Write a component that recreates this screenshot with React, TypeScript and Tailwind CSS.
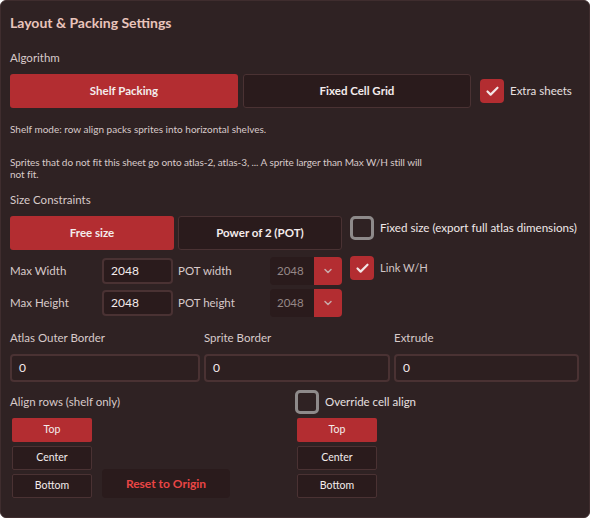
import { Check, ChevronDown } from 'lucide-react';

const font = { fontFamily: 'Lato, "Noto Sans", sans-serif' };

function Checkbox({ checked, label, labelClass }: { checked: boolean; label: string; labelClass?: string }) {
  return (
    <div className="flex items-center gap-[6px] shrink-0">
      {checked ? (
        <div className="w-[24px] h-[24px] shrink-0 rounded-[4px] bg-[#b32d31] flex items-center justify-center">
          <Check className="w-[15px] h-[15px] text-[#f2e6e6]" strokeWidth={3.5} />
        </div>
      ) : (
        <div className="w-[24px] h-[24px] shrink-0 rounded-[5px] border-[3px] border-[#8e8a8a]" />
      )}
      <span className={`whitespace-nowrap ${labelClass ?? 'text-[11.5px] text-[#e8e0e0]'}`}>{label}</span>
    </div>
  );
}

function SegButton({ active, label, className }: { active: boolean; label: string; className: string }) {
  return (
    <button
      className={
        active
          ? `${className} shrink-0 rounded-[3px] bg-[#b32d31] text-[#f4ecec] font-bold text-[11.5px]`
          : `${className} shrink-0 rounded-[3px] bg-[#2a1b1c] border border-[#4a3233] text-[#f4ecec] font-bold text-[11.5px]`
      }
    >
      {label}
    </button>
  );
}

function SmallButton({ active, label }: { active: boolean; label: string }) {
  return (
    <button
      className={
        active
          ? 'w-[80px] h-[24px] shrink-0 rounded-[2px] bg-[#b32d31] text-[10.5px] text-[#f4ecec]'
          : 'w-[80px] h-[24px] shrink-0 rounded-[2px] bg-[#2a1b1c] border border-[#4a3233] text-[10.5px] text-[#f4ecec]'
      }
    >
      {label}
    </button>
  );
}

function PotSelect() {
  return (
    <div className="flex w-[72px] h-[28px] shrink-0 rounded-[4px] overflow-hidden">
      <div className="flex-1 bg-[#2a1b1c] flex items-center pl-[7px] text-[11.5px] text-[#958787]">2048</div>
      <div className="w-[28px] bg-[#b32d31] flex items-center justify-center">
        <ChevronDown className="w-[12px] h-[12px] text-[#c9a9a9]" strokeWidth={3} />
      </div>
    </div>
  );
}

function NumInput({ value, className }: { value: string; className: string }) {
  return (
    <div
      className={`${className} shrink-0 rounded-[4px] border-2 border-[#4a3233] flex items-center px-[7px] text-[12px] text-[#f4ecec]`}
    >
      {value}
    </div>
  );
}

const label = 'text-[11.5px] text-[#d8caca] leading-[14px]';

export default function App() {
  return (
    <div style={font} className="w-[590px] h-[518px] bg-[#2f2223] border border-[#3f2d2e] rounded-[6px] px-[9px] pt-[11px] overflow-hidden">
      {/* Title */}
      <h2 className="text-[14px] font-bold text-[#e9c4bb] leading-[22px]">Layout &amp; Packing Settings</h2>

      {/* Algorithm */}
      <div className={`mt-[17px] ${label}`}>Algorithm</div>
      <div className="mt-[9px] flex items-center">
        <SegButton active label="Shelf Packing" className="w-[228px] h-[34px]" />
        <SegButton active={false} label="Fixed Cell Grid" className="ml-[5px] w-[228px] h-[34px]" />
        <div className="ml-[9px]">
          <Checkbox checked label="Extra sheets" />
        </div>
      </div>

      <p className="mt-[15px] text-[10px] text-[#d8caca] leading-[13px] whitespace-nowrap">
        Shelf mode: row align packs sprites into horizontal shelves.
      </p>
      <p className="mt-[20px] text-[10px] tracking-[-0.08px] text-[#d8caca] leading-[12px] whitespace-nowrap">
        Sprites that do not fit this sheet go onto atlas-2, atlas-3, ... A sprite larger than Max W/H still will
        <br />
        not fit.
      </p>

      {/* Size constraints */}
      <div className={`mt-[13px] ${label}`}>Size Constraints</div>
      <div className="mt-[9px] flex items-start">
        <SegButton active label="Free size" className="w-[164px] h-[34px]" />
        <SegButton active={false} label="Power of 2 (POT)" className="ml-[4px] w-[164px] h-[34px]" />
        <div className="ml-[8px]">
          <Checkbox checked={false} label="Fixed size (export full atlas dimensions)" labelClass="text-[11.6px] text-[#f0e8e8]" />
        </div>
      </div>

      <div className="mt-[7px] flex items-start">
        <div className="flex flex-col gap-[4px]">
          <div className="flex items-center h-[28px]">
            <span className={`w-[92px] ${label}`}>Max Width</span>
            <NumInput value="2048" className="w-[71px] h-[26px] bg-[#2a1b1c]" />
            <span className={`ml-[5px] w-[92px] ${label}`}>POT width</span>
            <PotSelect />
          </div>
          <div className="flex items-center h-[28px]">
            <span className={`w-[92px] ${label}`}>Max Height</span>
            <NumInput value="2048" className="w-[71px] h-[26px] bg-[#2a1b1c]" />
            <span className={`ml-[5px] w-[92px] ${label}`}>POT height</span>
            <PotSelect />
          </div>
        </div>
        <div className="ml-[8px] -mt-[1px]">
          <Checkbox checked label="Link W/H" labelClass="text-[11.2px] text-[#cfc4c4]" />
        </div>
      </div>

      {/* Borders */}
      <div className="mt-[14px] grid grid-cols-[190px_186px_1fr] gap-x-[4px] pr-[1px]">
        {['Atlas Outer Border', 'Sprite Border', 'Extrude'].map((l) => (
          <div key={l}>
            <div className={label}>{l}</div>
            <NumInput value="0" className="mt-[9px] w-full h-[28px] bg-[#2d1f20]" />
          </div>
        ))}
      </div>

      {/* Align */}
      <div className="mt-[8px] flex">
        <div className="w-[285px]">
          <div className={`h-[24px] flex items-center ${label}`}>Align rows (shelf only)</div>
          <div className="mt-[4px] pl-[2px] flex">
            <div className="flex flex-col gap-[4px]">
              <SmallButton active label="Top" />
              <SmallButton active={false} label="Center" />
              <SmallButton active={false} label="Bottom" />
            </div>
            <div className="ml-[10px] self-end">
              <button className="w-[128px] h-[29px] rounded-[4px] bg-[#2a1b1c] text-[12px] font-bold text-[#e94545]">
                Reset to Origin
              </button>
            </div>
          </div>
        </div>
        <div>
          <Checkbox checked={false} label="Override cell align" />
          <div className="mt-[4px] pl-[2px] flex flex-col gap-[4px]">
            <SmallButton active label="Top" />
            <SmallButton active={false} label="Center" />
            <SmallButton active={false} label="Bottom" />
          </div>
        </div>
      </div>
    </div>
  );
}
